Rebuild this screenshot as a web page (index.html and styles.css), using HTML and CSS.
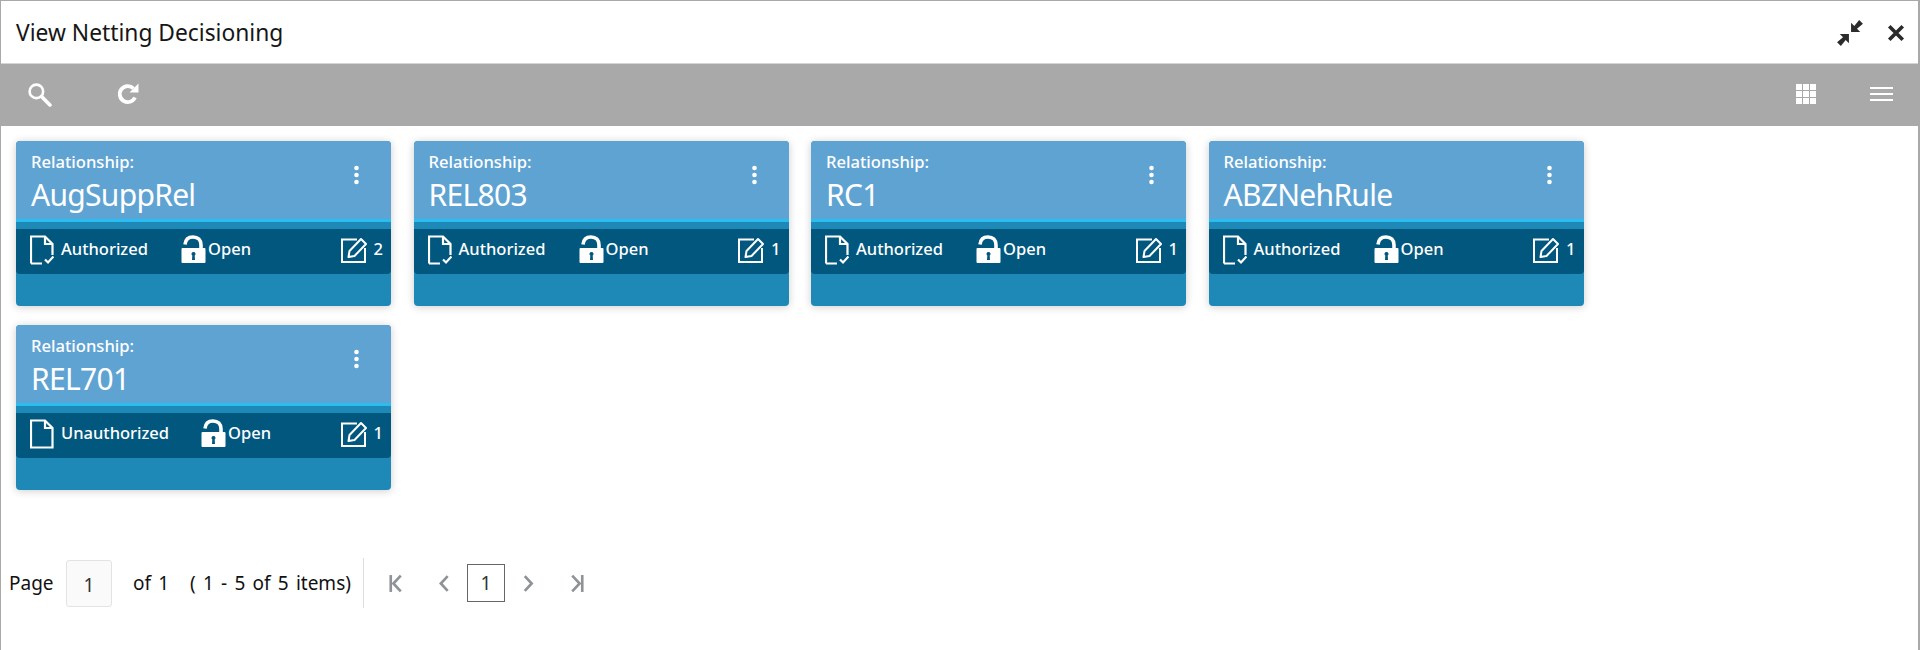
FILE: index.html
```html
<!DOCTYPE html>
<html lang="en">
<head>
<meta charset="utf-8">
<title>View Netting Decisioning</title>
<link rel="stylesheet" href="styles.css">
</head>
<body>
<svg class="defs" width="0" height="0" aria-hidden="true">
  <symbol id="doc" viewBox="0 0 24 30"><path d="M1 28.500V1.500H15L22.500 9V20M15 1.500V9H22.500M1 28.500H12" fill="none" stroke="currentColor" stroke-width="2.200"/><path d="M15 24.500l3 3 5.500-6" fill="none" stroke="currentColor" stroke-width="2.200"/></symbol>
  <symbol id="docplain" viewBox="0 0 24 30"><path d="M1 28.500V1.500H15L22.500 9V28.500ZM15 1.500V9H22.500" fill="none" stroke="currentColor" stroke-width="2.200"/></symbol>
  <symbol id="lock" viewBox="0 0 25 29"><path d="M4 9.500C4.500 4 8 2 12 2c5 0 8 3 8 8v3" fill="none" stroke="currentColor" stroke-width="3.600"/><path fill-rule="evenodd" d="M1.500 13H23.500a1 1 0 0 1 1 1V27a1 1 0 0 1-1 1H1.500a1 1 0 0 1-1-1V14a1 1 0 0 1 1-1ZM12.500 17a2 2 0 0 0-1.200 3.600L11 25h3l-.3-4.400A2 2 0 0 0 12.500 17Z" fill="currentColor"/></symbol>
  <symbol id="edit" viewBox="0 0 26 26"><path d="M16 2.500H1V25H24V11" fill="none" stroke="currentColor" stroke-width="2"/><path d="M7.500 20l1-6L20 2l5 5L13.500 19Z" fill="none" stroke="currentColor" stroke-width="2" stroke-linejoin="round"/></symbol>
  <symbol id="dots" viewBox="0 0 6 20"><circle cx="3" cy="3" r="2.300" fill="currentColor"/><circle cx="3" cy="10" r="2.300" fill="currentColor"/><circle cx="3" cy="17" r="2.300" fill="currentColor"/></symbol>
</svg>
<main class="window">
  <header class="titlebar">
    <h1 class="title">View Netting Decisioning</h1>
    <div class="window-actions">
      <svg class="ico-min" viewBox="0 0 26 26"><path fill="#2b2b2b" d="M14 12V3.500L17 6.500 21.500 1 25 4.500 19.500 9 22.500 12ZM12 14V22.500L9 19.500 4.500 25 1 21.500 6.500 17 3.500 14Z"/></svg>
      <svg class="ico-close" viewBox="0 0 16 16"><path d="M2 2 14 14M14 2 2 14" stroke="#2b2b2b" stroke-width="3.200" fill="none"/></svg>
    </div>
  </header>
  <div class="toolbar">
    <div class="tool-group">
      <svg class="ico-search" viewBox="0 0 24 24"><circle cx="9" cy="9" r="6.500" fill="none" stroke="#fff" stroke-width="2.500"/><path d="M14 14 22 22" stroke="#fff" stroke-width="3.500" stroke-linecap="round"/></svg>
      <svg class="ico-refresh" viewBox="0 0 24 24"><path d="M19 15.500A8 8 0 1 1 17.500 6.500" fill="none" stroke="#fff" stroke-width="3.800"/><path d="M13.500 10.500 22.500 1.500V10.500Z" fill="#fff"/></svg>
    </div>
    <div class="tool-group right">
      <svg class="ico-grid" viewBox="0 0 20 20"><path fill="#fff" d="M0 0h6v6H0zM7 0h6v6H7zM14 0h6v6h-6zM0 7h6v6H0zM7 7h6v6H7zM14 7h6v6h-6zM0 14h6v6H0zM7 14h6v6H7zM14 14h6v6h-6z"/></svg>
      <svg class="ico-menu" viewBox="0 0 23 14"><path fill="#fff" d="M0 0h23v2H0zM0 6h23v2H0zM0 12h23v2H0z"/></svg>
    </div>
  </div>
  <section class="cards">
    <article class="card">
      <div class="card-head"><div><div class="label">Relationship:</div><div class="name">AugSuppRel</div></div><svg class="dots"><use href="#dots"/></svg></div>
      <div class="card-band">
        <div class="status"><svg class="doc"><use href="#doc"/></svg><span class="s-text">Authorized</span></div>
        <div class="open"><svg class="lock"><use href="#lock"/></svg><span>Open</span></div>
        <div class="count"><svg class="edit"><use href="#edit"/></svg><span>2</span></div>
      </div>
    </article>
    <article class="card">
      <div class="card-head"><div><div class="label">Relationship:</div><div class="name">REL803</div></div><svg class="dots"><use href="#dots"/></svg></div>
      <div class="card-band">
        <div class="status"><svg class="doc"><use href="#doc"/></svg><span class="s-text">Authorized</span></div>
        <div class="open"><svg class="lock"><use href="#lock"/></svg><span>Open</span></div>
        <div class="count"><svg class="edit"><use href="#edit"/></svg><span>1</span></div>
      </div>
    </article>
    <article class="card">
      <div class="card-head"><div><div class="label">Relationship:</div><div class="name">RC1</div></div><svg class="dots"><use href="#dots"/></svg></div>
      <div class="card-band">
        <div class="status"><svg class="doc"><use href="#doc"/></svg><span class="s-text">Authorized</span></div>
        <div class="open"><svg class="lock"><use href="#lock"/></svg><span>Open</span></div>
        <div class="count"><svg class="edit"><use href="#edit"/></svg><span>1</span></div>
      </div>
    </article>
    <article class="card">
      <div class="card-head"><div><div class="label">Relationship:</div><div class="name">ABZNehRule</div></div><svg class="dots"><use href="#dots"/></svg></div>
      <div class="card-band">
        <div class="status"><svg class="doc"><use href="#doc"/></svg><span class="s-text">Authorized</span></div>
        <div class="open"><svg class="lock"><use href="#lock"/></svg><span>Open</span></div>
        <div class="count"><svg class="edit"><use href="#edit"/></svg><span>1</span></div>
      </div>
    </article>
    <article class="card">
      <div class="card-head"><div><div class="label">Relationship:</div><div class="name">REL701</div></div><svg class="dots"><use href="#dots"/></svg></div>
      <div class="card-band">
        <div class="status"><svg class="doc"><use href="#docplain"/></svg><span class="s-text">Unauthorized</span></div>
        <div class="open wide"><svg class="lock"><use href="#lock"/></svg><span>Open</span></div>
        <div class="count"><svg class="edit"><use href="#edit"/></svg><span>1</span></div>
      </div>
    </article>
  </section>
  <footer class="pager">
    <span class="page-word">Page</span>
    <span class="page-input">1</span>
    <span class="of">of 1</span>
    <span class="items">( 1 - 5 of 5 items)</span>
    <span class="sep"></span>
    <svg class="nav first" viewBox="0 0 12 18"><path d="M1.500 1V17" stroke="#8f9296" stroke-width="2.500" fill="none"/><path d="M11 1.500 4 9l7 7.500" stroke="#8f9296" stroke-width="2.500" fill="none"/></svg>
    <svg class="nav prev" viewBox="0 0 10 18"><path d="M8.500 2 2 9l6.500 7" stroke="#8f9296" stroke-width="2.500" fill="none"/></svg>
    <span class="page-current">1</span>
    <svg class="nav next" viewBox="0 0 10 18"><path d="M1.500 2 8 9l-6.500 7" stroke="#8f9296" stroke-width="2.500" fill="none"/></svg>
    <svg class="nav last" viewBox="0 0 12 18"><path d="M10.500 1V17" stroke="#8f9296" stroke-width="2.500" fill="none"/><path d="M1 1.500 8 9l-7 7.500" stroke="#8f9296" stroke-width="2.500" fill="none"/></svg>
  </footer>
</main>
</body>
</html>
```
FILE: styles.css
```css
* { box-sizing: border-box; }
html, body { margin: 0; padding: 0; }
body { background: #fff; font-family: "Noto Sans", sans-serif; color: #111; }
.defs { display: block; height: 0; }
.window { width: 1920px; height: 650px; border: 1px solid #a9a9a9; border-bottom: 0; border-right-width: 2px; display: flex; flex-direction: column; }
.titlebar { height: 63px; flex: none; display: flex; align-items: center; justify-content: space-between; padding: 2px 13px 0 15px; border-bottom: 1px solid #d5d5d5; }
.title { margin: 0; font: 400 22.800px/1 "Noto Sans", sans-serif; color: #161616; }
.window-actions { display: flex; align-items: center; gap: 23px; }
.ico-min { width: 28px; height: 28px; }
.ico-close { width: 18px; height: 18px; }
.toolbar { height: 62px; flex: none; background: #a9a9a9; display: flex; align-items: center; justify-content: space-between; padding: 0 25px 2px 26px; }
.tool-group { display: flex; align-items: center; gap: 64px; }
.tool-group.right { gap: 54px; }
.ico-search { width: 25px; height: 25px; }
.ico-refresh { width: 24px; height: 24px; }
.ico-grid { width: 20px; height: 20px; }
.ico-menu { width: 23px; height: 14px; }
.cards { display: flex; flex-wrap: wrap; align-content: flex-start; gap: 19px 22.500px; padding: 15px 0 0 15px; height: 394px; flex: none; }
.card { width: 375px; height: 165px; background: #1e88b7; border-radius: 4px; box-shadow: 0 1px 8px rgba(0,0,0,.2); color: #fff; }
.card-head { height: 81px; background: #5fa3d3; border-bottom: 3px solid #29bdf2; border-radius: 4px 4px 0 0; display: flex; justify-content: space-between; padding: 10px 31px 0 15px; }
.label { font: 500 16.600px/22px "Noto Sans", sans-serif; }
.name { font: 400 30px/38px "Noto Sans", sans-serif; margin-top: 3px; letter-spacing: -.7px; }
.dots { width: 7px; height: 20px; margin-top: 14px; }
.card-band { height: 45px; margin-top: 7px; background: #01577d; border-radius: 0 0 4px 4px; display: flex; align-items: center; padding: 0 8px 4px 14px; font: 500 16.500px/1 "Noto Sans", sans-serif; }
.status { display: flex; align-items: center; width: 151px; flex: none; }
.doc { width: 24px; height: 30px; flex: none; }
.s-text { margin-left: 7px; }
.open { display: flex; align-items: center; gap: 2px; }
.open.wide { margin-left: 20px; }
.lock { width: 25px; height: 29px; flex: none; }
.count { margin-left: auto; display: flex; align-items: center; gap: 7px; }
.edit { width: 26px; height: 26px; flex: none; }
.pager { display: flex; align-items: center; height: 52px; margin-top: 37px; padding-left: 8px; font: 400 19px/1 "Noto Sans", sans-serif; word-spacing: 2.300px; color: #111; }
.page-word { width: 57px; }
.page-input { width: 46px; height: 47px; padding-top: 4px; display: flex; align-items: center; justify-content: center; background: #fafafa; border: 1px solid #e3e3e3; border-radius: 3px; color: #333; }
.of { margin-left: 21px; width: 57px; }
.items { width: 173px; white-space: nowrap; }
.sep { width: 1px; height: 50px; background: #ddd; }
.nav { flex: none; }
.first { width: 13px; height: 19px; margin-left: 25px; }
.prev { width: 12px; height: 19px; margin-left: 36px; }
.page-current { width: 38px; height: 38px; margin-left: 17px; display: flex; align-items: center; justify-content: center; border: 1px solid #666; color: #333; }
.next { width: 11px; height: 19px; margin-left: 18px; }
.last { width: 13px; height: 19px; margin-left: 37px; }
```
